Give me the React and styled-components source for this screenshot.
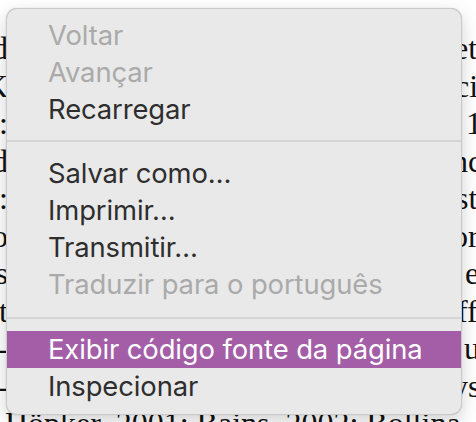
import React from "react";
import styled, { createGlobalStyle } from "styled-components";

const Global = createGlobalStyle`
  html, body {
    margin: 0;
    padding: 0;
    background: #ffffff;
    overflow: hidden;
  }
  body {
    width: 476px;
    height: 422px;
  }
`;

const Page = styled.div`
  position: relative;
  width: 476px;
  height: 422px;
  overflow: hidden;
  padding-top: 30px;
  box-sizing: border-box;
  font-family: "Liberation Serif", "Times New Roman", serif;
  font-size: 32px;
  line-height: 37.5px;
  color: #111;
`;

const Line = styled.div`
  display: grid;
  grid-template-columns: 8px max-content;
  white-space: nowrap;
`;

const LeftBit = styled.span`
  justify-self: end;
`;

const RightBit = styled.span`
  margin-left: ${(p) => p.$at - 8}px;
`;

const FullLine = styled.div`
  white-space: nowrap;
  padding-left: 5px;
`;

const Menu = styled.div`
  position: absolute;
  top: 8px;
  left: 6px;
  width: 456px;
  box-sizing: border-box;
  padding: 8px 0 9px;
  background: #e9e9e9;
  border: 1px solid rgba(0, 0, 0, 0.13);
  border-radius: 11px;
  box-shadow: 0 6px 18px rgba(0, 0, 0, 0.18), 0 0 1px rgba(0, 0, 0, 0.2);
  font-family: "Inter", "Liberation Sans", Arial, sans-serif;
  font-size: 27.4px;
  letter-spacing: -0.1px;
`;

const Item = styled.div`
  height: 37px;
  display: flex;
  align-items: center;
  padding-left: 41px;
  color: ${(p) => (p.$disabled ? "#aaaaaa" : p.$active ? "#ffffff" : "#2e2e2e")};
  background: ${(p) => (p.$active ? "#a35ea7" : "transparent")};
  white-space: nowrap;
`;

const Separator = styled.div`
  padding: ${(p) => p.$top}px 0 ${(p) => p.$bottom}px;
  &::after {
    content: "";
    display: block;
    height: 2px;
    background: #d5d5d5;
  }
`;

const lines = [
  ["d", "et", 454],
  ["K", "ci", 455],
  ["o:", "1", 466],
  ["d", "nc", 452],
  [":", "st", 456],
  ["o", "or", 452],
  ["s", "e", 465],
  ["it", "ff", 457],
  ["-", "u", 464],
  ["-", "ys", 452],
];

const groups = [
  [
    { label: "Voltar", disabled: true },
    { label: "Avançar", disabled: true },
    { label: "Recarregar" },
  ],
  [
    { label: "Salvar como…" },
    { label: "Imprimir…" },
    { label: "Transmitir…" },
    { label: "Traduzir para o português", disabled: true },
  ],
  [
    { label: "Exibir código fonte da página", active: true },
    { label: "Inspecionar" },
  ],
];

const seps = [
  [12, 13],
  [14, 12],
];

export default function App() {
  return (
    <>
      <Global />
      <Page>
        {lines.map(([l, r, at], i) => (
          <Line key={i}>
            <LeftBit>{l}</LeftBit>
            <RightBit $at={at}>{r}</RightBit>
          </Line>
        ))}
        <FullLine>Höpker, 2001; Bains, 2002; Bollina,</FullLine>
        <Menu>
          {groups.map((g, gi) => (
            <React.Fragment key={gi}>
              {g.map((it) => (
                <Item key={it.label} $disabled={it.disabled} $active={it.active}>
                  {it.label}
                </Item>
              ))}
              {gi < seps.length && <Separator $top={seps[gi][0]} $bottom={seps[gi][1]} />}
            </React.Fragment>
          ))}
        </Menu>
      </Page>
    </>
  );
}
